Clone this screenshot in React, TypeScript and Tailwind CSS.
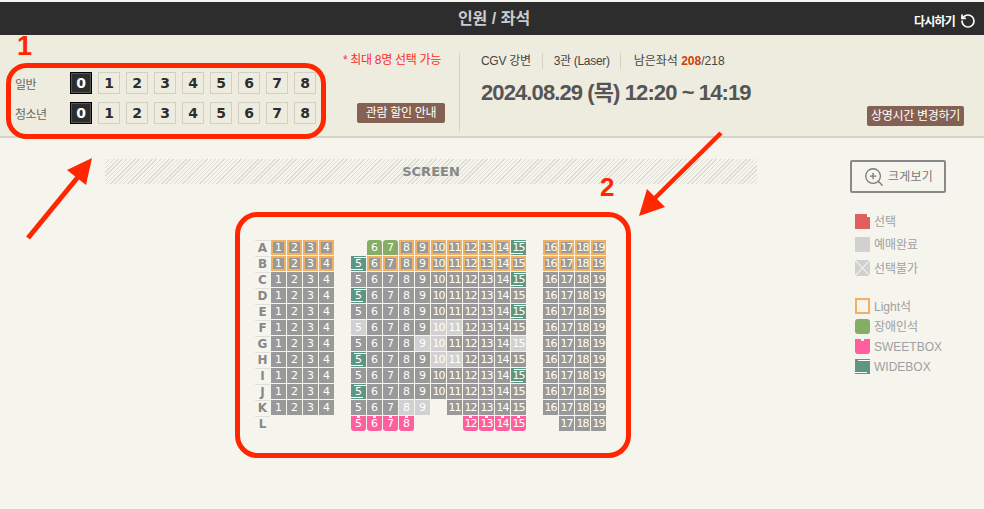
import { RotateCcw, ZoomIn } from "lucide-react";

const KR = "font-['Liberation_Sans','Noto_Sans_CJK_KR',sans-serif]";
const VERDANA = "font-['DejaVu_Sans',sans-serif]";

type SeatKind = "normal" | "light" | "green" | "wide" | "sold" | "pink" | "none";

const COLUMNS: (number | null)[] = [1, 2, 3, 4, null, 5, 6, 7, 8, 9, 10, 11, 12, 13, 14, 15, null, 16, 17, 18, 19];
const ROWS = ["A", "B", "C", "D", "E", "F", "G", "H", "I", "J", "K", "L"];

// Seats that differ from the plain grey one, per row
const OVERRIDES: Record<string, Partial<Record<number, SeatKind>>> = {
  C: { 15: "wide" },
  D: { 5: "wide" },
  E: { 15: "wide" },
  F: { 5: "sold", 10: "sold", 11: "sold" },
  G: { 9: "sold", 10: "sold", 15: "sold" },
  H: { 5: "wide", 10: "sold", 11: "sold" },
  I: { 15: "wide" },
  J: { 5: "wide" },
  K: { 8: "sold", 9: "sold", 10: "none" },
};

const seatKind = (row: string, n: number): SeatKind => {
  if (row === "A") {
    if (n === 5) return "none";
    if (n === 6 || n === 7) return "green";
    if (n === 15) return "wide";
    return "light";
  }
  if (row === "B") return n === 5 ? "wide" : "light";
  if (row === "L") {
    if (n <= 4 || n === 9 || n === 10 || n === 11 || n === 16) return "none";
    if (n >= 17) return "normal";
    return "pink";
  }
  return OVERRIDES[row]?.[n] ?? "normal";
};

const WideLines = () => (
  <>
    <span className="absolute top-[1px] left-[3px] right-0 h-px bg-white" />
    <span className="absolute bottom-[1px] left-0 right-[3px] h-px bg-white" />
  </>
);

const Seat = ({ kind, n }: { kind: SeatKind; n: number }) => {
  if (kind === "none") return <div />;

  const styles: Record<string, string> = {
    normal: "bg-[#999999]",
    light: "bg-[#999999] border-2 border-[#f2b161]",
    green: "bg-[#85ad65] rounded-t-[3px]",
    wide: "bg-[#5d9682]",
    sold: "bg-[#d1d1d1]",
    pink: "bg-[#ff5f9e] rounded-b-[3px]",
  };

  return (
    <div
      className={`relative flex h-[15px] w-[15px] items-center justify-center text-[11px] leading-none text-white ${VERDANA} ${n > 9 ? "tracking-[-1px]" : ""} ${styles[kind]}`}
    >
      {kind === "wide" && <WideLines />}
      {kind === "pink" && (
        <span className="absolute top-0 left-[6px] h-[2px] w-[3px] bg-[#f5f5ee]" />
      )}
      {n}
    </div>
  );
};

const SeatMap = () => (
  <div className="mt-[56px] ml-[255px] grid grid-cols-[repeat(22,16px)] auto-rows-[16px]">
    {ROWS.map((row) => (
      <div key={row} className="contents">
        <div
          className={`flex h-[15px] w-[15px] items-center justify-center border-t border-[#e0e0d8] text-[12px] font-bold text-[#888888] ${VERDANA}`}
        >
          {row}
        </div>
        {COLUMNS.map((n, i) =>
          n === null ? <div key={i} /> : <Seat key={i} kind={seatKind(row, n)} n={n} />
        )}
      </div>
    ))}
  </div>
);

const CountRow = ({ label }: { label: string }) => (
  <div className="flex h-[22px] items-center">
    <span className={`w-[55px] pt-[4px] text-[12px] tracking-[-0.5px] text-[#666666] ${KR}`}>{label}</span>
    <div className="flex gap-[6px]">
      {[0, 1, 2, 3, 4, 5, 6, 7, 8].map((n) => (
        <div
          key={n}
          className={`flex h-[22px] w-[22px] items-center justify-center border text-[14px] font-bold ${VERDANA} ${
            n === 0
              ? "border-black bg-[#2d2d2d] text-white shadow-[inset_0_0_0_1px_#555555]"
              : "border-[#d2d0c4] text-[#2d2d2d]"
          }`}
        >
          {n}
        </div>
      ))}
    </div>
  </div>
);

const BrownButton = ({ children }: { children: string }) => (
  <div
    className={`flex h-[20px] items-center justify-center rounded-[2px] bg-[#856153] text-[12px] tracking-[-0.3px] text-white ${KR}`}
  >
    {children}
  </div>
);

const LegendItem = ({ label, children }: { label: string; children: React.ReactNode }) => (
  <div className="flex items-center gap-[4px]">
    {children}
    <span className={`pt-[1px] text-[12px] leading-none text-[#a0a0a0] ${KR}`}>{label}</span>
  </div>
);

const Legend = () => (
  <div className="mt-[22px] flex w-[100px] flex-col">
    <button
      className={`flex h-[33px] w-[96px] items-center justify-center gap-[3px] rounded-[2px] border-2 border-[#888888] text-[12px] tracking-[0.2px] text-[#777777] ${KR}`}
    >
      <ZoomIn size={22} strokeWidth={1.4} />
      크게보기
    </button>
    <div className="mt-[21px] ml-[5px] flex flex-col gap-[8px]">
      <LegendItem label="선택">
        <div className="relative h-[15px] w-[15px] bg-[#e0605f]">
          <span className="absolute top-0 right-0 h-[3px] w-[3px] bg-white" />
        </div>
      </LegendItem>
      <LegendItem label="예매완료">
        <div className="h-[15px] w-[15px] bg-[#d1d1d1]" />
      </LegendItem>
      <LegendItem label="선택불가">
        <svg width="15" height="16" viewBox="0 0 15 16" className="bg-[#d1d1d1]">
          <path d="M0 0L15 16M15 0L0 16" stroke="#ffffff" strokeWidth="1" />
        </svg>
      </LegendItem>
    </div>
    <div className="mt-[22px] ml-[5px] flex flex-col gap-[5px]">
      <LegendItem label="Light석">
        <div className="h-[16px] w-[15px] border-2 border-[#f2b161]" />
      </LegendItem>
      <LegendItem label="장애인석">
        <div className="h-[15px] w-[15px] rounded-[3px] bg-[#85ad65]" />
      </LegendItem>
      <LegendItem label="SWEETBOX">
        <div className="relative h-[15px] w-[15px] rounded-b-[3px] bg-[#ff5f9e]">
          <span className="absolute top-0 left-[6px] h-[2px] w-[3px] bg-[#f5f5ee]" />
        </div>
      </LegendItem>
      <LegendItem label="WIDEBOX">
        <div className="relative h-[15px] w-[15px] bg-[#5d9682]">
          <WideLines />
        </div>
      </LegendItem>
    </div>
  </div>
);

// Red marks drawn on top of the screenshot
const Annotations = () => (
  <>
    <svg width="984" height="509" viewBox="0 0 984 509" fill="none" className="absolute top-0 left-0">
      <rect x="8.5" y="65.5" width="315" height="71" rx="18" stroke="#ff2600" strokeWidth="5" />
      <rect x="237.5" y="214.5" width="391" height="241" rx="20" stroke="#ff2600" strokeWidth="5" />
      <path d="M28 238L78 177" stroke="#ff2600" strokeWidth="5" />
      <path d="M92 158L67 170L86 185Z" fill="#ff2600" />
      <path d="M721 133L654 199" stroke="#ff2600" strokeWidth="4.5" />
      <path d="M639 216L647 189L665 207Z" fill="#ff2600" />
    </svg>
    <span className="absolute top-[30px] left-[17px] font-['Liberation_Sans',sans-serif] text-[27px] leading-[32px] font-bold text-[#ff2600]">
      1
    </span>
    <span className="absolute top-[171px] left-[600px] font-['Liberation_Sans',sans-serif] text-[26px] leading-[32px] font-bold text-[#ff2600]">
      2
    </span>
  </>
);

export default function App() {
  return (
    <div className={`relative h-[509px] w-[984px] overflow-hidden bg-[#f5f5ee] pt-[2px] ${KR}`}>
      {/* Header */}
      <div className="relative flex h-[33px] items-center justify-center bg-[#2d2d2d]">
        <span className="ml-[4px] text-[16px] font-bold text-[#cccccc]">인원 / 좌석</span>
        <div className="absolute right-[8px] top-[9px] flex items-center gap-[5px] text-white">
          <span className="pt-[2px] text-[12px] font-bold tracking-[-0.8px]">다시하기</span>
          <RotateCcw size={16} strokeWidth={2.5} />
        </div>
      </div>

      {/* Ticket count and movie info */}
      <div className="flex h-[103px] border-b-2 border-[#d4d3c6] bg-[#eeecdf] pt-[18px]">
        <div className="flex h-[79px] w-[460px] justify-between border-r border-[#d4d3c6] pr-[14px] pl-[15px]">
          <div className="flex flex-col gap-[8px] pt-[19px]">
            <CountRow label="일반" />
            <CountRow label="청소년" />
          </div>
          <div className="flex flex-col items-end justify-between pb-[9px]">
            <span className="mr-[4px] text-[12px] leading-[14px] tracking-[-0.3px] text-[#ff2b2b]">
              * 최대 8명 선택 가능
            </span>
            <div className="w-[88px]">
              <BrownButton>관람 할인 안내</BrownButton>
            </div>
          </div>
        </div>

        <div className="flex flex-1 flex-col pl-[21px]">
          <div className="flex h-[16px] items-center text-[12px] tracking-[-0.3px] text-[#444444]">
            <span>CGV 강변</span>
            <span className="mx-[11px] h-[16px] w-px bg-[#d4d3c6]" />
            <span>3관 (Laser)</span>
            <span className="mr-[13px] ml-[10px] h-[16px] w-px bg-[#d4d3c6]" />
            <span className="tracking-[0px]">
              남은좌석 <b className="text-[#c8420c]">208</b>/218
            </span>
          </div>
          <div className="mt-[11px] text-[22px] leading-[26px] font-bold tracking-[-0.9px] text-[#555555]">
            2024.08.29 (목) 12:20 ~ 14:19
          </div>
          <div className="mr-[20px] ml-auto w-[97px]">
            <BrownButton>상영시간 변경하기</BrownButton>
          </div>
        </div>
      </div>

      {/* Screen, seats and legend */}
      <div className="flex">
        <div className="w-[850px]">
          <div className="mt-[21px] ml-[105px] flex h-[25px] w-[652px] items-center justify-center bg-[repeating-linear-gradient(135deg,#dcdcd4_0,#dcdcd4_1px,transparent_1px,transparent_3px)]">
            <span className={`text-[13px] font-bold text-[#888888] ${VERDANA}`}>SCREEN</span>
          </div>
          <SeatMap />
        </div>
        <Legend />
      </div>

      <Annotations />
    </div>
  );
}
